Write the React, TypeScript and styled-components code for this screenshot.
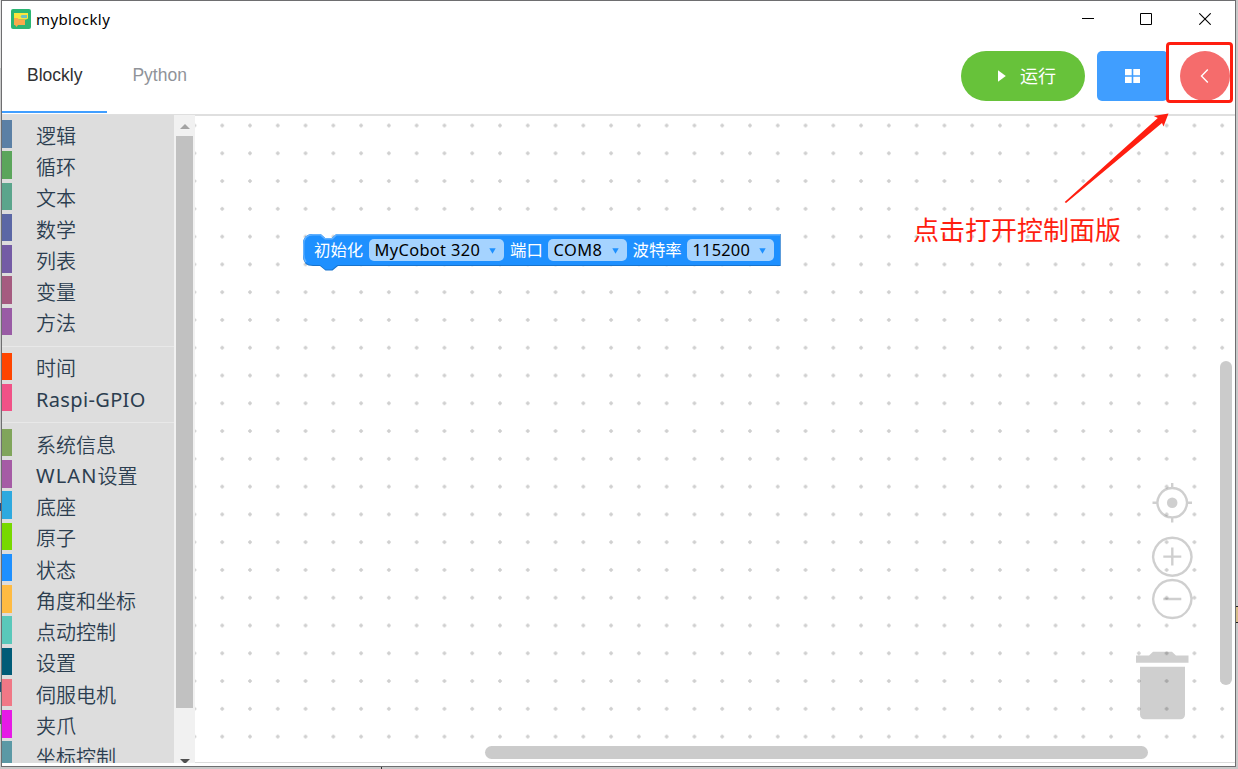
import React from "react";
import styled, { createGlobalStyle } from "styled-components";

const UI_FONT = '"Noto Sans", "Noto Sans CJK SC", sans-serif';
const MARK_RED = "#ff1e10";

const GlobalStyle = createGlobalStyle`
  * { box-sizing: border-box; }
  body { margin: 0; overflow: hidden; }
  svg { display: block; flex: none; }
`;

const Desktop = styled.div`
  position: relative;
  width: 1238px;
  height: 769px;
  padding: 0 2px 2px 1px;
  background: #c8c9c9;
  font-family: ${UI_FONT};
`;

const Speck = styled.span<{ $x: number; $y: number; $w: number; $h: number; $color: string }>`
  position: absolute;
  left: ${(p) => p.$x}px;
  top: ${(p) => p.$y}px;
  width: ${(p) => p.$w}px;
  height: ${(p) => p.$h}px;
  background: ${(p) => p.$color};
`;

const AppWindow = styled.div`
  display: flex;
  flex-direction: column;
  width: 1235px;
  height: 767px;
  border: 1px solid #6e6e70;
  background: #fff;
`;

const TitleBar = styled.div`
  display: flex;
  align-items: center;
  justify-content: space-between;
  height: 37px;
  padding: 0 24px 1px 9px;
`;

const TitleGroup = styled.div`
  display: flex;
  align-items: center;
  gap: 5px;
`;

const TitleText = styled.span`
  font-size: 15px;
  line-height: 20px;
  letter-spacing: 0.4px;
  color: #000;
`;

const WindowButtons = styled.div`
  display: flex;
  align-items: center;
  gap: 46px;

  svg:last-child { margin-left: 1px; }
`;

const Header = styled.div`
  display: flex;
  justify-content: space-between;
  height: 78px;
  flex: none;
  border-bottom: 2px solid #dfdfdf;
`;

const Tabs = styled.div`
  display: flex;
  height: 75px;
`;

const Tab = styled.div<{ $active?: boolean }>`
  display: flex;
  align-items: center;
  padding: 1px 25px 0;
  border-bottom: 2px solid ${(p) => (p.$active ? "#409eff" : "transparent")};
  font-family: "Liberation Sans", Arial, sans-serif;
  font-size: 17.5px;
  color: ${(p) => (p.$active ? "#303133" : "#909399")};
`;

const Actions = styled.div`
  display: flex;
  gap: 12px;
  padding: 13px 5px 0 0;
`;

const ActionButton = styled.button<{ $bg: string; $width: number; $radius: number; $shift?: number }>`
  display: flex;
  align-items: center;
  justify-content: center;
  width: ${(p) => p.$width}px;
  height: 50px;
  padding: 0 0 1px ${(p) => p.$shift ?? 0}px;
  border: 0;
  border-radius: ${(p) => p.$radius}px;
  background: ${(p) => p.$bg};
  color: #fff;
  font-family: ${UI_FONT};
  font-size: 18px;
`;

const RunLabel = styled.span`
  margin: 0 0 1px 14px;
`;

const Body = styled.div`
  display: flex;
  height: 649px;
  margin-top: -1px;
`;

const Toolbox = styled.div`
  width: 172px;
  height: 648px;
  flex: none;
  padding-top: 5px;
  overflow: hidden;
  background: #ddd;
`;

const Category = styled.div<{ $color: string }>`
  display: flex;
  align-items: center;
  height: 27.5px;
  margin-bottom: 3.75px;
  padding: 5px 0 0 24px;
  border-left: 10px solid ${(p) => p.$color};
  color: #2c3e50;
  font-size: 20px;
  font-weight: 350;
  line-height: 27px;
  white-space: nowrap;
`;

const Latin = styled.span<{ $spacing: number }>`
  margin-top: -2px;
  font-weight: 400;
  letter-spacing: ${(p) => p.$spacing}px;
`;

const Divider = styled.div`
  height: 1px;
  margin: 11px 0 5.5px;
  background: #e8e8e8;
`;

const ToolboxScroll = styled.div`
  display: flex;
  flex-direction: column;
  align-items: center;
  width: 21px;
  height: 648px;
  flex: none;
  padding-top: 9px;
  overflow: hidden;
  background: #f1f1f1;
`;

const ToolboxThumb = styled.div`
  width: 17px;
  height: 572px;
  flex: none;
  margin: 7px 0 51px;
  background: #c1c1c1;
`;

const Workspace = styled.div`
  position: relative;
  width: 1040px;
  height: 647px;
  margin-top: 1px;
  border-bottom: 1px solid #dcdcdc;
`;

const CanvasArt = styled.svg`
  position: absolute;
  inset: 0;
`;

const ScrollHandle = styled.div<{ $x: number; $y: number; $w: number; $h: number }>`
  position: absolute;
  left: ${(p) => p.$x}px;
  top: ${(p) => p.$y}px;
  width: ${(p) => p.$w}px;
  height: ${(p) => p.$h}px;
  border-radius: 7px;
  background: #cbcbcb;
`;

const Block = styled.div`
  position: absolute;
  left: 108px;
  top: 118px;
  width: 478px;
  height: 38px;
`;

const BlockShape = styled.svg`
  position: absolute;
  inset: 0;
`;

const BlockRow = styled.div`
  position: relative;
  display: flex;
  align-items: center;
  height: 32px;
  padding-left: 11px;
`;

const BlockLabel = styled.span<{ $width: number }>`
  width: ${(p) => p.$width}px;
  padding-bottom: 1px;
  color: #fff;
  font-size: 16.4px;
  line-height: 22px;
  white-space: nowrap;
`;

const Field = styled.span<{ $width: number; $gap: number; $spacing: number }>`
  display: flex;
  align-items: center;
  justify-content: space-between;
  width: ${(p) => p.$width}px;
  height: 22px;
  margin-right: ${(p) => p.$gap}px;
  padding: 0 8.5px 1px 5.5px;
  border-radius: 5px;
  background: #a5d3ff;
  color: #000;
  font-size: 16.4px;
  letter-spacing: ${(p) => p.$spacing}px;
  white-space: nowrap;

  svg { margin-top: 3px; }
`;

const HighlightBox = styled.div`
  position: absolute;
  left: 1166px;
  top: 42px;
  width: 67px;
  height: 61px;
  border: 3px solid ${MARK_RED};
  border-radius: 4px;
`;

const PointerArrow = styled.svg`
  position: absolute;
  left: 1060px;
  top: 110px;
`;

const Note = styled.div`
  position: absolute;
  left: 913px;
  top: 211px;
  color: ${MARK_RED};
  font-size: 26px;
  line-height: 38px;
  white-space: nowrap;
`;

type Item = { name: string; color: string };

const groups: Item[][] = [
  [
    { name: "逻辑", color: "#5b80a5" },
    { name: "循环", color: "#5ba55b" },
    { name: "文本", color: "#5ba58c" },
    { name: "数学", color: "#5b67a5" },
    { name: "列表", color: "#745ba5" },
    { name: "变量", color: "#a55b80" },
    { name: "方法", color: "#995ba5" },
  ],
  [
    { name: "时间", color: "#ff4500" },
    { name: "Raspi-GPIO", color: "#f15287" },
  ],
  [
    { name: "系统信息", color: "#80a55b" },
    { name: "WLAN设置", color: "#a55ba5" },
    { name: "底座", color: "#2ea9df" },
    { name: "原子", color: "#77d900" },
    { name: "状态", color: "#1e90ff" },
    { name: "角度和坐标", color: "#ffbb42" },
    { name: "点动控制", color: "#5ac8ba" },
    { name: "设置", color: "#005b77" },
    { name: "伺服电机", color: "#f07886" },
    { name: "夹爪", color: "#e61ae6" },
    { name: "坐标控制", color: "#5b99a5" },
  ],
];

const CategoryName = ({ name }: { name: string }) => {
  const latin = name.match(/^[A-Za-z-]+/)?.[0] ?? "";
  const rest = name.slice(latin.length);
  return (
    <>
      {latin && <Latin $spacing={rest ? 1.1 : 0.35}>{latin}</Latin>}
      {rest}
    </>
  );
};

const AppIcon = () => (
  <svg width="20" height="20" viewBox="0 0 20 20">
    <rect width="20" height="20" rx="2" fill="#2bb673" />
    <path d="M3 4h14v5.5l-2 1H3z" fill="#fbe63c" />
    <path d="M3 9h3.500l1.500 1.500h6V16H7l-1.500 2L4 16H3z" fill="#f9a94b" />
    <path d="M9.500 7.500l1.200-1.500H16v3h-5.300z" fill="#6cc3c0" />
  </svg>
);

const DropArrow = () => (
  <svg width="7" height="6" viewBox="0 0 7 6">
    <path d="M.3.2h6.400L3.500 5.800z" fill="#1e90ff" />
  </svg>
);

const CanvasDrawing = () => (
  <CanvasArt width="1040" height="646" viewBox="195 116 1040 646">
    <defs>
      <pattern id="grid" x="208.32" y="111.62" width="27.777" height="27.777" patternUnits="userSpaceOnUse">
        <path d="M11.9 13.9h4M13.9 11.9v4" stroke="#ccc" strokeWidth="1.5" fill="none" />
      </pattern>
    </defs>
    <rect x="195" y="116" width="1040" height="646" fill="url(#grid)" />
    <g fill="none" stroke="#000" strokeOpacity="0.19" strokeWidth="2.4">
      <path d="M1172.2 488a14.7 14.7 0 1 0 .01 0zM1172.2 483v4M1172.2 518.500v4M1152.500 502.700h4M1188 502.700h4" />
      <path d="M1172.300 537.700a19 19 0 1 0 .01 0zM1163.300 556.600h18M1172.300 547.600v18" />
      <path d="M1172.300 580a19 19 0 1 0 .01 0zM1163.300 599h18" />
    </g>
    <g fill="#000" fillOpacity="0.19">
      <circle cx="1172.200" cy="502.700" r="5.300" />
      <path d="M1136 655.500h13l4-3.800h19l4 3.800h12.500v7.300H1136z" />
      <path d="M1140 666.700h45v48a4.500 4.500 0 0 1-4.500 4.500h-36a4.500 4.500 0 0 1-4.500-4.500z" />
    </g>
  </CanvasArt>
);

const InitBlock = () => (
  <Block>
    <BlockShape width="478" height="38" viewBox="0 0 478 38">
      <path
        d="M0 10.500Q0 0 10 0H17.500L22 4H29L33.500 0H477.700V32H35L29.500 36.500H22.500L17 32H10Q0 32 0 22z"
        fill="#1873cc"
      />
      <path
        d="M0 10.500Q0 0 10 0H17.500L22 4H29L33.500 0H477V31H34.500L29 35.500H22.500L17 31H10Q0 31 0 21z"
        fill="#1e90ff"
      />
      <path
        d="M3 28Q.7 25 .7 20V10.500Q.7.700 10 .7H17.300L22 4.700H29.200L33.500.700H477"
        fill="none"
        stroke="#62b1ff"
        strokeWidth="1.400"
      />
    </BlockShape>
    <BlockRow>
      <BlockLabel $width={55}>初始化</BlockLabel>
      <Field $width={135} $gap={6} $spacing={0.35}>
        MyCobot 320 <DropArrow />
      </Field>
      <BlockLabel $width={38}>端口</BlockLabel>
      <Field $width={79} $gap={5.500} $spacing={0.4}>
        COM8 <DropArrow />
      </Field>
      <BlockLabel $width={54.500}>波特率</BlockLabel>
      <Field $width={87} $gap={0} $spacing={0.2}>
        115200 <DropArrow />
      </Field>
    </BlockRow>
  </Block>
);

export default function App() {
  return (
    <>
      <GlobalStyle />
      <Desktop>
        <Speck $x={0} $y={0} $w={1} $h={68} $color="#e4e4e4" />
        <Speck $x={0} $y={503} $w={1} $h={8} $color="#0b4f96" />
        <Speck $x={0} $y={682} $w={1} $h={10} $color="#254f78" />
        <Speck $x={0} $y={715} $w={1} $h={9} $color="#555" />
        <Speck $x={1236} $y={606} $w={2} $h={17} $color="#222" />
        <Speck $x={1236} $y={607} $w={2} $h={15} $color="#d6bd8c" />
        <Speck $x={381} $y={767} $w={1} $h={2} $color="#333" />
        <AppWindow>
          <TitleBar>
            <TitleGroup>
              <AppIcon />
              <TitleText>myblockly</TitleText>
            </TitleGroup>
            <WindowButtons>
              <svg width="12" height="12" viewBox="0 0 12 12">
                <path d="M0 5.500h12" stroke="#000" />
              </svg>
              <svg width="12" height="12" viewBox="0 0 12 12">
                <path d="M.5.500h11v11H.5z" fill="none" stroke="#000" />
              </svg>
              <svg width="12" height="12" viewBox="0 0 12 12">
                <path d="M.3.300l11.400 11.400M11.700.300L.3 11.700" stroke="#000" strokeWidth="1.100" />
              </svg>
            </WindowButtons>
          </TitleBar>
          <Header>
            <Tabs>
              <Tab $active>Blockly</Tab>
              <Tab>Python</Tab>
            </Tabs>
            <Actions>
              <ActionButton $bg="#67c23a" $width={124} $radius={25} $shift={8}>
                <svg width="8" height="12" viewBox="0 0 8 12">
                  <path d="M0 .3L7.800 6 0 11.700z" fill="#fff" />
                </svg>
                <RunLabel>运行</RunLabel>
              </ActionButton>
              <ActionButton $bg="#409eff" $width={71} $radius={5}>
                <svg width="15" height="14" viewBox="0 0 15 14">
                  <path d="M0 0h6.700v6.200H0zM8.300 0H15v6.200H8.300zM0 7.800h6.700V14H0zM8.300 7.800H15V14H8.300z" fill="#fff" />
                </svg>
              </ActionButton>
              <ActionButton $bg="#f56c6c" $width={50} $radius={25}>
                <svg width="11" height="14" viewBox="0 0 11 14">
                  <path d="M7.800.600L1.500 7l6.300 6.400" fill="none" stroke="#fff" strokeWidth="1.400" />
                </svg>
              </ActionButton>
            </Actions>
          </Header>
          <Body>
            <Toolbox>
              {groups.map((group, i) => (
                <React.Fragment key={i}>
                  {i > 0 && <Divider />}
                  {group.map((item) => (
                    <Category key={item.name} $color={item.color}>
                      <CategoryName name={item.name} />
                    </Category>
                  ))}
                </React.Fragment>
              ))}
            </Toolbox>
            <ToolboxScroll>
              <svg width="10" height="5" viewBox="0 0 10 5">
                <path d="M0 5L5 0l5 5z" fill="#a3a3a3" />
              </svg>
              <ToolboxThumb />
              <svg width="10" height="5" viewBox="0 0 10 5">
                <path d="M0 0h10L5 5z" fill="#505050" />
              </svg>
            </ToolboxScroll>
            <Workspace>
              <CanvasDrawing />
              <InitBlock />
              <ScrollHandle $x={1024.500} $y={245} $w={12.500} $h={323.500} />
              <ScrollHandle $x={290} $y={630} $w={662.500} $h={13} />
            </Workspace>
          </Body>
        </AppWindow>
        <HighlightBox />
        <PointerArrow width="112" height="96" viewBox="1060 110 112 96">
          <path d="M1064.700 201.900L1157.800 118l-4-2L1168.500 113.500 1163.500 126.500l-1.500-3.500L1066 203z" fill={MARK_RED} />
        </PointerArrow>
        <Note>点击打开控制面版</Note>
      </Desktop>
    </>
  );
}
